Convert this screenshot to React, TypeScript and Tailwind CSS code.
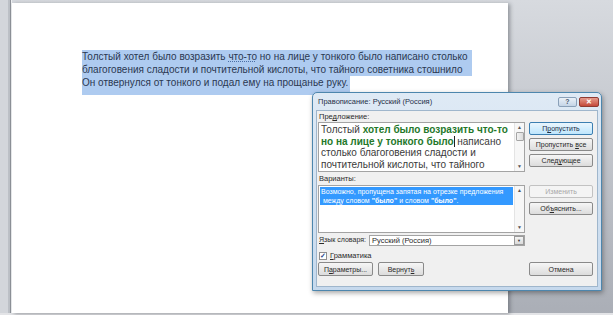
import React from "react";

// Word 2010 spell-check dialog over a selected paragraph

function Btn({ children, primary, disabled, className = "" }: { children: React.ReactNode; primary?: boolean; disabled?: boolean; className?: string }) {
  const look = primary
    ? "border-[#3c7fb1] bg-gradient-to-b from-[#eaf6fd] to-[#bee6fd] text-[#1f2f45]"
    : disabled
    ? "border-[#c2c2c2] bg-[#f4f4f4] text-[#a8a8a8]"
    : "border-[#8a8a8a] bg-gradient-to-b from-[#f6f6f6] to-[#dcdcdc] text-[#2a2a2a]";
  return (
    <div className={`flex items-center justify-center h-[13px] rounded-[2px] border text-[7px] leading-none whitespace-nowrap ${look} ${className}`}>
      {children}
    </div>
  );
}

function ScrollArrows({ thumb }: { thumb?: boolean }) {
  return (
    <div className="flex flex-col items-center w-[10px] border-l border-[#e4e4e4] bg-[#f7f7f7]">
      <div className="h-[9px] flex items-center justify-center text-[5px] text-[#555]">▲</div>
      {thumb && <div className="w-[8px] h-[9px] border border-[#a5a5a5] rounded-[1px] bg-gradient-to-r from-[#f2f2f2] to-[#dcdcdc]" />}
      <div className="flex-1" />
      <div className="h-[9px] flex items-center justify-center text-[5px] text-[#555]">▼</div>
    </div>
  );
}

export default function App() {
  return (
    <div className="relative w-[613px] h-[315px] overflow-hidden bg-gradient-to-b from-[#d7dadf] to-[#aaaeb6] font-['Liberation_Sans',Arial,sans-serif]">
      <div className="flex h-[313px]">
        <div className="w-[8px] bg-[#d3d6db]" />
        <div className="w-[2px] bg-[#bcc0c6]" />
        <div className="w-[1px] bg-[#8d9198]" />
        <div className="w-[1px] bg-[#eef0f2]" />
        <div className="mt-[3px] w-[496px] h-[310px] bg-white shadow-[2px_1px_4px_rgba(60,64,72,0.45)]">
          <div className="pt-[47px] pl-[70px] text-[10px] text-[#2b3850]">
            <div className="w-[390px] h-[13px] leading-[13px] bg-[#aecbf0] whitespace-nowrap">
              Толстый хотел было возразить <span className="underline decoration-dotted decoration-[#4a6fa5]">что-то</span>  но на лице у тонкого было написано столько
            </div>
            <div className="w-[390px] h-[13px] leading-[13px] bg-[#aecbf0] whitespace-nowrap">
              благоговения сладости и почтительной кислоты, что тайного советника стошнило
            </div>
            <div className="w-[268px] h-[19px] leading-[13px] bg-[#aecbf0] whitespace-nowrap">
              Он отвернулся от тонкого и подал ему на прощанье руку.
            </div>
          </div>
        </div>
      </div>
      <div className="h-[2px] bg-[#e3e4e7]" />

      {/* dialog */}
      <div className="absolute left-[312px] top-[92px] w-[290px] h-[199px] rounded-t-[5px] border border-[#4d86ad] bg-gradient-to-b from-[#dfeaf5] to-[#c6d9ed] shadow-[1px_2px_5px_rgba(0,0,0,0.35)] flex flex-col">
        <div className="h-[17px] flex items-center pl-[5px] pr-[2px]">
          <span className="text-[7.5px] text-[#1e2f48]">Правописание: Русский (Россия)</span>
          <div className="flex-1" />
          <div className="w-[19px] h-[10px] rounded-[2px] border border-[#8aa0b8] bg-gradient-to-b from-[#eaf1f8] to-[#c4d4e6] text-[7px] leading-[8px] text-center text-[#4a5a70] font-bold">?</div>
          <div className="ml-[2px] w-[20px] h-[10px] rounded-[2px] border border-[#8f3b32] bg-gradient-to-b from-[#e59a8c] to-[#c4483a] text-[7px] leading-[8px] text-center text-white font-bold">✕</div>
        </div>
        <div className="mx-[3px] mb-[3px] flex-1 bg-[#f0f0f0] border border-[#9fb6cc] pl-[1px] pr-[4px] text-[7.5px] text-[#2a2a2a]">
          <div className="h-[11px] pt-[2px] pl-[1px] leading-none">Пре<span className="underline">д</span>ложение:</div>
          <div className="flex">
            <div className="w-[207px] h-[50px] border border-[#a3a3a3] bg-white flex">
              <div className="flex-1 pl-[2px] pt-[1px] text-[10px] leading-[11.5px] text-[#3a3a3a] overflow-hidden whitespace-nowrap">
                <div>Толстый <b className="text-[#24782a]">хотел было возразить что-то</b></div>
                <div><b className="text-[#24782a]">но на лице у тонкого было</b><span className="border-l border-[#222]" /> написано</div>
                <div>столько благоговения сладости и</div>
                <div>почтительной кислоты, что тайного</div>
              </div>
              <ScrollArrows thumb />
            </div>
            <div className="flex-1" />
            <div className="w-[64px] flex flex-col gap-[3px]">
              <Btn primary>П<span className="underline">р</span>опустить</Btn>
              <Btn className="text-[6.6px]">Пропустить&nbsp;<span className="underline">в</span>се</Btn>
              <Btn>След<span className="underline">у</span>ющее</Btn>
            </div>
          </div>
          <div className="h-[13px] pl-[1px] flex items-center leading-none">Варианты:</div>
          <div className="flex">
            <div className="w-[207px] h-[48px] border border-[#a3a3a3] bg-white flex">
              <div className="flex-1 min-w-0 pt-[1px] pl-[1px] pr-[1px]">
                <div className="h-[18px] bg-[#3399ff] text-white text-[7px] leading-[9px] pl-[1px] whitespace-pre overflow-hidden">
                  <div>Возможно, пропущена запятая на отрезке предложения</div>
                  <div> между словом <b>"было"</b> и словом <b>"было"</b>.</div>
                </div>
              </div>
              <ScrollArrows />
            </div>
            <div className="flex-1" />
            <div className="w-[64px] flex flex-col gap-[4px]">
              <Btn disabled>Изменить</Btn>
              <Btn>Об<span className="underline">ъ</span>яснить...</Btn>
            </div>
          </div>
          <div className="flex items-center mt-[2px] h-[11px]">
            <div className="w-[51px] pl-[1px] text-[7px] whitespace-nowrap"><span className="underline">Я</span>зык словаря:</div>
            <div className="w-[156px] h-[11px] border border-[#a3a3a3] bg-white flex items-center">
              <div className="flex-1 pl-[2px]">Русский (Россия)</div>
              <div className="w-[10px] h-[9px] border border-[#9a9a9a] bg-gradient-to-b from-[#f4f4f4] to-[#dadada] text-[4px] leading-[7px] text-center text-[#333]">▼</div>
            </div>
          </div>
          <div className="flex items-center mt-[5px] h-[9px] pl-[1px]">
            <div className="w-[8px] h-[8px] border border-[#8f8f8f] bg-white text-[7px] leading-[6px] text-center text-[#2b4a8a] font-bold">✓</div>
            <span className="ml-[3px]"><span className="underline">Г</span>рамматика</span>
          </div>
          <div className="flex mt-[2px]">
            <Btn className="w-[55px] h-[14px]">П<span className="underline">а</span>раметры...</Btn>
            <Btn className="ml-[5px] w-[46px] h-[14px]">Вернут<span className="underline">ь</span></Btn>
            <div className="flex-1" />
            <Btn className="w-[64px] h-[14px]">Отмена</Btn>
          </div>
        </div>
      </div>
    </div>
  );
}
